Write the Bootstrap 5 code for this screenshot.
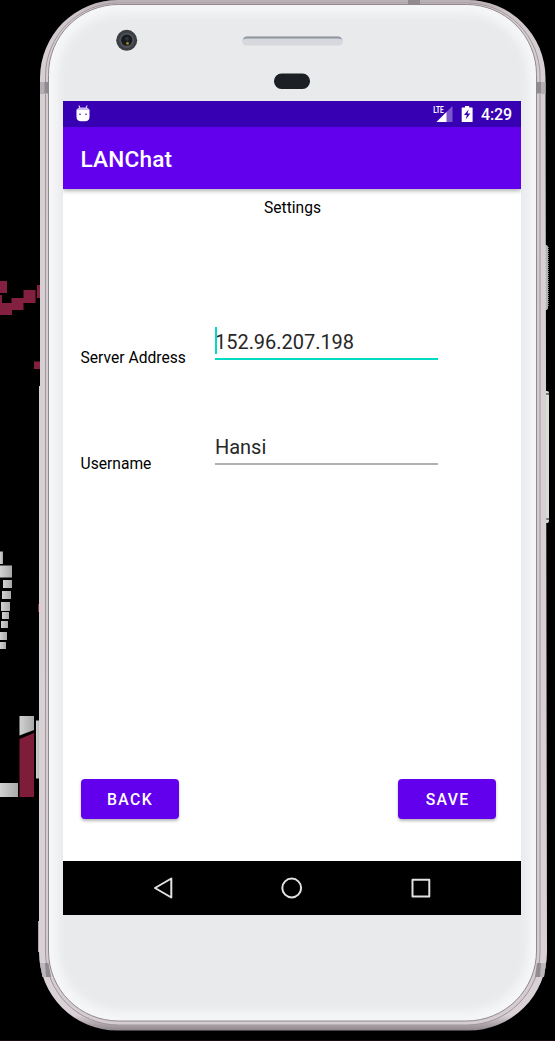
<!DOCTYPE html>
<html lang="en">
<head>
<meta charset="utf-8">
<meta name="viewport" content="width=device-width, initial-scale=1">
<title>LANChat</title>
<link href="https://cdn.jsdelivr.net/npm/bootstrap@5.3.0/dist/css/bootstrap.min.css" rel="stylesheet">
<style>
body{background:#000;font-family:Roboto,sans-serif;color:#111;overflow:hidden}
.stage{width:555px;height:1041px;padding:101px 34px 126px 63px}
.device{left:0;top:0;width:555px;height:1041px}
.screen{z-index:1;background:#fff;width:458px;height:814px}
.status-row{height:26px;background:#3700b3;color:#fff;padding:0 9px 0 13px}
.clock{font-size:16px;font-weight:500;line-height:26px;padding-top:1px;letter-spacing:-.1px}
.app-bar{height:62px;background:#6200ee;box-shadow:0 2px 4px rgba(0,0,0,.3);clip-path:inset(0 0 -8px 0);padding:5px 17px 0 17.5px}
.app-title{font-size:22.6px;font-weight:500;color:#fff;line-height:1;letter-spacing:.2px}
.label-text{font-size:15.6px;line-height:20px;letter-spacing:.02px;color:#000}
.settings-title{padding:9px 0 0 1px}
.field-row{padding-left:17.5px}
.server-row{margin-top:108px}
.user-row{margin-top:71px}
.label-col{width:134.5px;margin-bottom:-8px}
.user-row .label-col{margin-bottom:-9px}
.android-input{width:223px;height:34px;border:0;border-bottom:2px solid #b0b0b0;border-radius:0;padding:2px 0 3px;font-size:20px;line-height:27px;letter-spacing:-.03px;color:#272727;background:transparent}
.android-input.active{border-color:#03dac5}
.caret{left:0;top:1px;width:2px;height:27px;background:#03dac5}
.btn-app{width:98px;height:40px;background:#6200ee;color:#fff;border:0;border-radius:4px;font-size:15.8px;font-weight:500;letter-spacing:1.3px;padding:2px 0 0 1px;box-shadow:0 2px 3px rgba(0,0,0,.28)}
.actions{padding:0 25px 42px 17.5px}
.nav-keys{height:54px;background:#000}
</style>
</head>
<body>
<main class="stage position-relative">
<svg class="device position-absolute" viewBox="0 0 555 1041" aria-hidden="true">
  <defs>
    <linearGradient id="rim" x1="0" y1="0" x2="0" y2="1"><stop offset="0" stop-color="#b9b0b3"/><stop offset=".012" stop-color="#cdc5c8"/><stop offset=".05" stop-color="#d6cfd2"/><stop offset=".985" stop-color="#d9d1d5"/><stop offset="1" stop-color="#8e868a"/></linearGradient>
    <linearGradient id="block"><stop offset="0" stop-color="#d2d2d2"/><stop offset="1" stop-color="#a9a9a9"/></linearGradient>
    <filter id="soft" x="-10%" y="-10%" width="120%" height="120%"><feGaussianBlur stdDeviation="4"/></filter>
    <clipPath id="faceclip"><rect x="49" y="5" width="487.500" height="1016" rx="70"/></clipPath>
  </defs>
  <!-- blocky backdrop -->
  <g fill="#84203f">
    <path d="M0 281h7v12H0zM0 295h2v8h10v12H0zM11.500 298h12v12h-12zM23.500 290h12v13h-12zM37 285h4v13h-4zM34 361.500h7v7.500h-7z"/>
    <path fill="#7d1d3a" d="M19.500 739 34 733v64H19.500z"/>
  </g>
  <g fill="url(#block)">
    <rect y="551.500" width="3" height="12.500"/><rect y="565.500" width="12" height="12"/><rect x="3" y="580" width="9" height="8"/><rect x="2" y="591" width="9" height="8"/><rect x="1" y="602" width="9" height="9"/><rect x="2" y="612" width="7" height="7"/><rect x="1" y="621" width="7" height="7"/><rect y="632" width="7" height="8"/><rect y="642" width="6" height="7"/>
    <path d="M19.500 716H34v14l-14.500 5.500z"/><rect y="783" width="18" height="14"/><rect x="36" y="720.500" width="5" height="58"/>
  </g>
  <rect y="1040" width="555" height="1" fill="#1a0a11"/>
  <!-- side keys -->
  <rect x="543" y="245" width="5" height="65" rx="2" fill="#aeb4b4"/>
  <path d="M548.300 247v60" stroke="#9aa0a0" stroke-dasharray="1 1"/>
  <rect x="543" y="391" width="6" height="132" rx="2" fill="#d7dcd4"/><path d="M545 394h4M545 519h4" stroke="#777" stroke-width="2"/>
  <!-- body rim -->
  <path d="M118 0H467A78 78 0 0 1 545.500 78L547 952A78 78.500 0 0 1 468 1030.500H117A78 78.500 0 0 1 39 952V386H40V78A78 78 0 0 1 118 0Z" fill="url(#rim)"/>
  <path d="M38.500 921v31" stroke="#aaa2a6"/><path d="M38.500 604v8" stroke="#84203f"/>
  <rect x="45.500" y="3" width="494.500" height="1022" rx="73" fill="#d4ccd0" stroke="#a0979c"/>
  <g fill="#918b91"><rect x="408" y="0" width="12" height="4.500"/><rect x="40" y="82" width="9" height="12" fill="#b4adb1"/><rect x="44.500" y="82" width="5" height="11"/><rect x="536" y="82" width="9.500" height="12" fill="#b4adb1"/><rect x="536" y="82" width="5" height="11"/><path d="M40 963h8.500l2.500 14h-8.500zM537 963h9l-2 14h-9z"/><path d="M40 963h5l1 14h-3.500zM541 963h5l-2 14h-4z" fill="#bdb7bb"/></g>
  <rect x="48.500" y="4.500" width="488" height="1016.500" rx="70" fill="#f5f6f8" stroke="#91888d"/>
  <g clip-path="url(#faceclip)"><rect x="58" y="14" width="470" height="997" rx="62" fill="#e9eaec" filter="url(#soft)"/></g>
  <!-- camera, speaker, sensor -->
  <circle cx="126.700" cy="40.300" r="10.500" fill="#3b3f43"/><circle cx="126.700" cy="40.500" r="7.500" fill="#50545a"/><circle cx="126.700" cy="40.200" r="5.600" fill="#17191d"/><circle cx="127" cy="38.800" r="2" fill="#2b3444"/><circle cx="127.500" cy="43.200" r="1.500" fill="#8c8127"/>
  <rect x="242" y="36.500" width="101" height="9" rx="4.500" fill="#d6d8dd"/><path d="M243 39.500q1-3 4-3h91q3 0 4 3-2-1-4-1h-91q-2 0-4 1z" fill="#8e959f"/>
  <rect x="274" y="73.500" width="36" height="15.500" rx="7.500" fill="#1c1f23"/>
</svg>

<section class="screen position-relative d-flex flex-column">
  <div class="status-row d-flex align-items-center flex-shrink-0">
    <svg width="14" height="18" viewBox="0 0 14 18"><path d="M3 .5 4.200 4M11 .5 9.800 4" stroke="#fff"/><path d="M.5 4.500h13v7q0 4.800-4.500 4.800H5Q.5 16.300.5 11.500z" fill="#fff"/><path d="M1 5q0-2.500 3-2.500h6q3 0 3 2.500z" fill="#c9b8ee"/><circle cx="4" cy="9.200" r=".8" fill="#3700b3"/><circle cx="10" cy="9.200" r=".8" fill="#3700b3"/></svg>
    <svg class="ms-auto" width="21" height="18" viewBox="0 0 21 18"><path d="M20.500 1v16h-16z" fill="#7d57cd"/><path d="M14.500 7v10h-10z" fill="#fff"/><path d="M0 0h12v8.800H0z" fill="#3700b3"/><text x="1.200" y="8.200" font-family="Roboto" font-size="9.600" font-weight="700" fill="#fff" textLength="10.500" lengthAdjust="spacingAndGlyphs">LTE</text></svg>
    <svg class="ms-2" width="12" height="18" viewBox="0 0 12 18"><path d="M1.300 2.500H4V1h4.200v1.500H11q.6 0 .6.600v13.300q0 .6-.6.600H1.300q-.6 0-.6-.6V3.100q0-.6.600-.6z" fill="#fff"/><path d="M7.600 4.500 3 10h2.900l-1.200 4.500L9.300 8.500H6.500z" fill="#3700b3"/></svg>
    <span class="clock ms-2">4:29</span>
  </div>
  <header class="app-bar navbar flex-shrink-0"><h1 class="app-title m-0">LANChat</h1></header>
  <h2 class="settings-title label-text fw-normal text-center m-0">Settings</h2>
  <div class="field-row server-row d-flex align-items-end">
    <label class="label-col label-text" for="address">Server Address</label>
    <div class="position-relative"><input id="address" class="form-control android-input active" value="152.96.207.198"><span class="caret position-absolute"></span></div>
  </div>
  <div class="field-row user-row d-flex align-items-end">
    <label class="label-col label-text" for="user">Username</label>
    <input id="user" class="form-control android-input" value="Hansi">
  </div>
  <div class="actions d-flex justify-content-between mt-auto">
    <button class="btn btn-app">BACK</button><button class="btn btn-app">SAVE</button>
  </div>
  <nav class="nav-keys flex-shrink-0" aria-label="System">
    <svg width="458" height="54" viewBox="0 0 458 54" fill="none" stroke="#e2e2e2" stroke-width="2" stroke-linejoin="round"><path d="M92 27 108.300 17.500v19z"/><circle cx="228.700" cy="27" r="9.400"/><rect x="349.500" y="18.700" width="16.800" height="16.800"/></svg>
  </nav>
</section>
</main>
<script src="https://cdn.jsdelivr.net/npm/bootstrap@5.3.0/dist/js/bootstrap.bundle.min.js"></script>
</body>
</html>
